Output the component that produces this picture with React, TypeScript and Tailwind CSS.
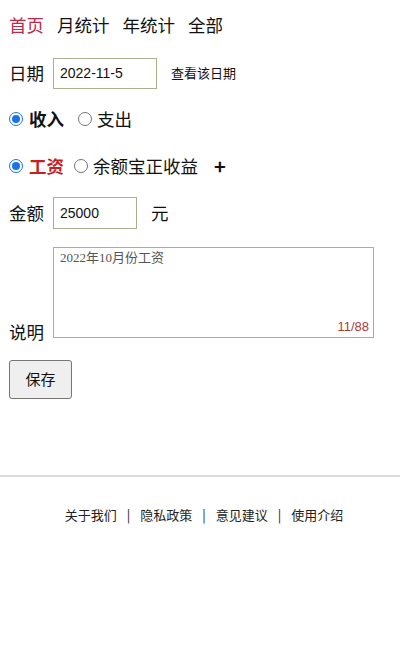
import { useState } from "react";

const navItems = ["首页", "月统计", "年统计", "全部"];
const links = ["关于我们", "隐私政策", "意见建议", "使用介绍"];

function Radio({ checked }: { checked: boolean }) {
  return checked ? (
    <span className="inline-flex w-[14px] h-[14px] rounded-full border border-[#1a73e8] bg-white items-center justify-center">
      <span className="w-[8px] h-[8px] rounded-full bg-[#1a73e8]" />
    </span>
  ) : (
    <span className="inline-block w-[14px] h-[14px] rounded-full border border-[#767676] bg-white" />
  );
}

export default function App() {
  const [type, setType] = useState("in");
  const [cat, setCat] = useState("salary");
  const note = "2022年10月份工资";

  return (
    <div className="w-[400px] min-h-[660px] bg-white text-[#111] font-['Noto_Sans_CJK_SC',sans-serif]">
      <div className="px-[9px]">
        {/* Nav */}
        <div className="flex items-center gap-[13px] pt-[13px] h-[37px] text-[17.5px] leading-none">
          {navItems.map((n, i) => (
            <span key={n} className={i === 0 ? "text-[#c0284a]" : "text-[#111]"}>
              {n}
            </span>
          ))}
        </div>

        {/* Date */}
        <div className="flex items-center mt-[21px] h-[30px]">
          <span className="text-[17.5px] w-[44px]">日期</span>
          <div className="w-[104px] h-[31px] border border-[#a9b18f] flex items-center pl-[6px] text-[14px] font-['Liberation_Sans',sans-serif]">
            2022-11-5
          </div>
          <span className="ml-[14px] text-[13px]">查看该日期</span>
        </div>

        {/* Type */}
        <div className="flex items-center mt-[16px] h-[30px] text-[17.5px]">
          <label className="flex items-center gap-[6px]" onClick={() => setType("in")}>
            <Radio checked={type === "in"} />
            <span className="font-bold">收入</span>
          </label>
          <label className="flex items-center gap-[5px] ml-[14px]" onClick={() => setType("out")}>
            <Radio checked={type === "out"} />
            <span>支出</span>
          </label>
        </div>

        {/* Category */}
        <div className="flex items-center mt-[17px] h-[30px] text-[17.5px]">
          <label className="flex items-center gap-[6px]" onClick={() => setCat("salary")}>
            <Radio checked={cat === "salary"} />
            <span className="font-bold text-[#c81e1e]">工资</span>
          </label>
          <label className="flex items-center gap-[5px] ml-[10px]" onClick={() => setCat("yeb")}>
            <Radio checked={cat === "yeb"} />
            <span>余额宝正收益</span>
          </label>
          <span className="ml-[16px] font-bold text-[20px] leading-none">+</span>
        </div>

        {/* Amount */}
        <div className="flex items-center mt-[16px] h-[32px]">
          <span className="text-[17.5px] w-[44px]">金额</span>
          <div className="w-[84px] h-[32px] border border-[#a9b18f] flex items-center pl-[6px] text-[14px] font-['Liberation_Sans',sans-serif]">
            25000
          </div>
          <span className="ml-[14px] text-[17.5px]">元</span>
        </div>

        {/* Note */}
        <div className="flex items-end mt-[18px]">
          <span className="text-[17.5px] w-[44px] leading-none mb-[-2px]">说明</span>
          <div className="relative w-[321px] h-[91px] border border-[#a9b18f] px-[6px] pt-0 leading-[14px]">
            <span className="text-[13px] text-[#555] font-['Liberation_Serif','Noto_Sans_CJK_SC',serif]">{note}</span>
            <span className="absolute right-[4px] bottom-[2px] text-[13px] leading-[16px] text-[#b03a3a] font-['Liberation_Sans',sans-serif]">
              {note.length}/88
            </span>
          </div>
        </div>

        {/* Save */}
        <button className="mt-[22px] w-[63px] h-[39px] bg-[#efefef] border border-[#767676] rounded-[3px] text-[15px]">
          保存
        </button>
      </div>

      <div className="mt-[76px] h-[2px] bg-[#dcdcdc]" />

      <div className="flex justify-center items-center mt-[28px] pl-[8px] text-[13px] text-[#222]">
        {links.map((l, i) => (
          <span key={l} className="flex items-center">
            {i > 0 && <span className="mx-[10px]">|</span>}
            {l}
          </span>
        ))}
      </div>
    </div>
  );
}
